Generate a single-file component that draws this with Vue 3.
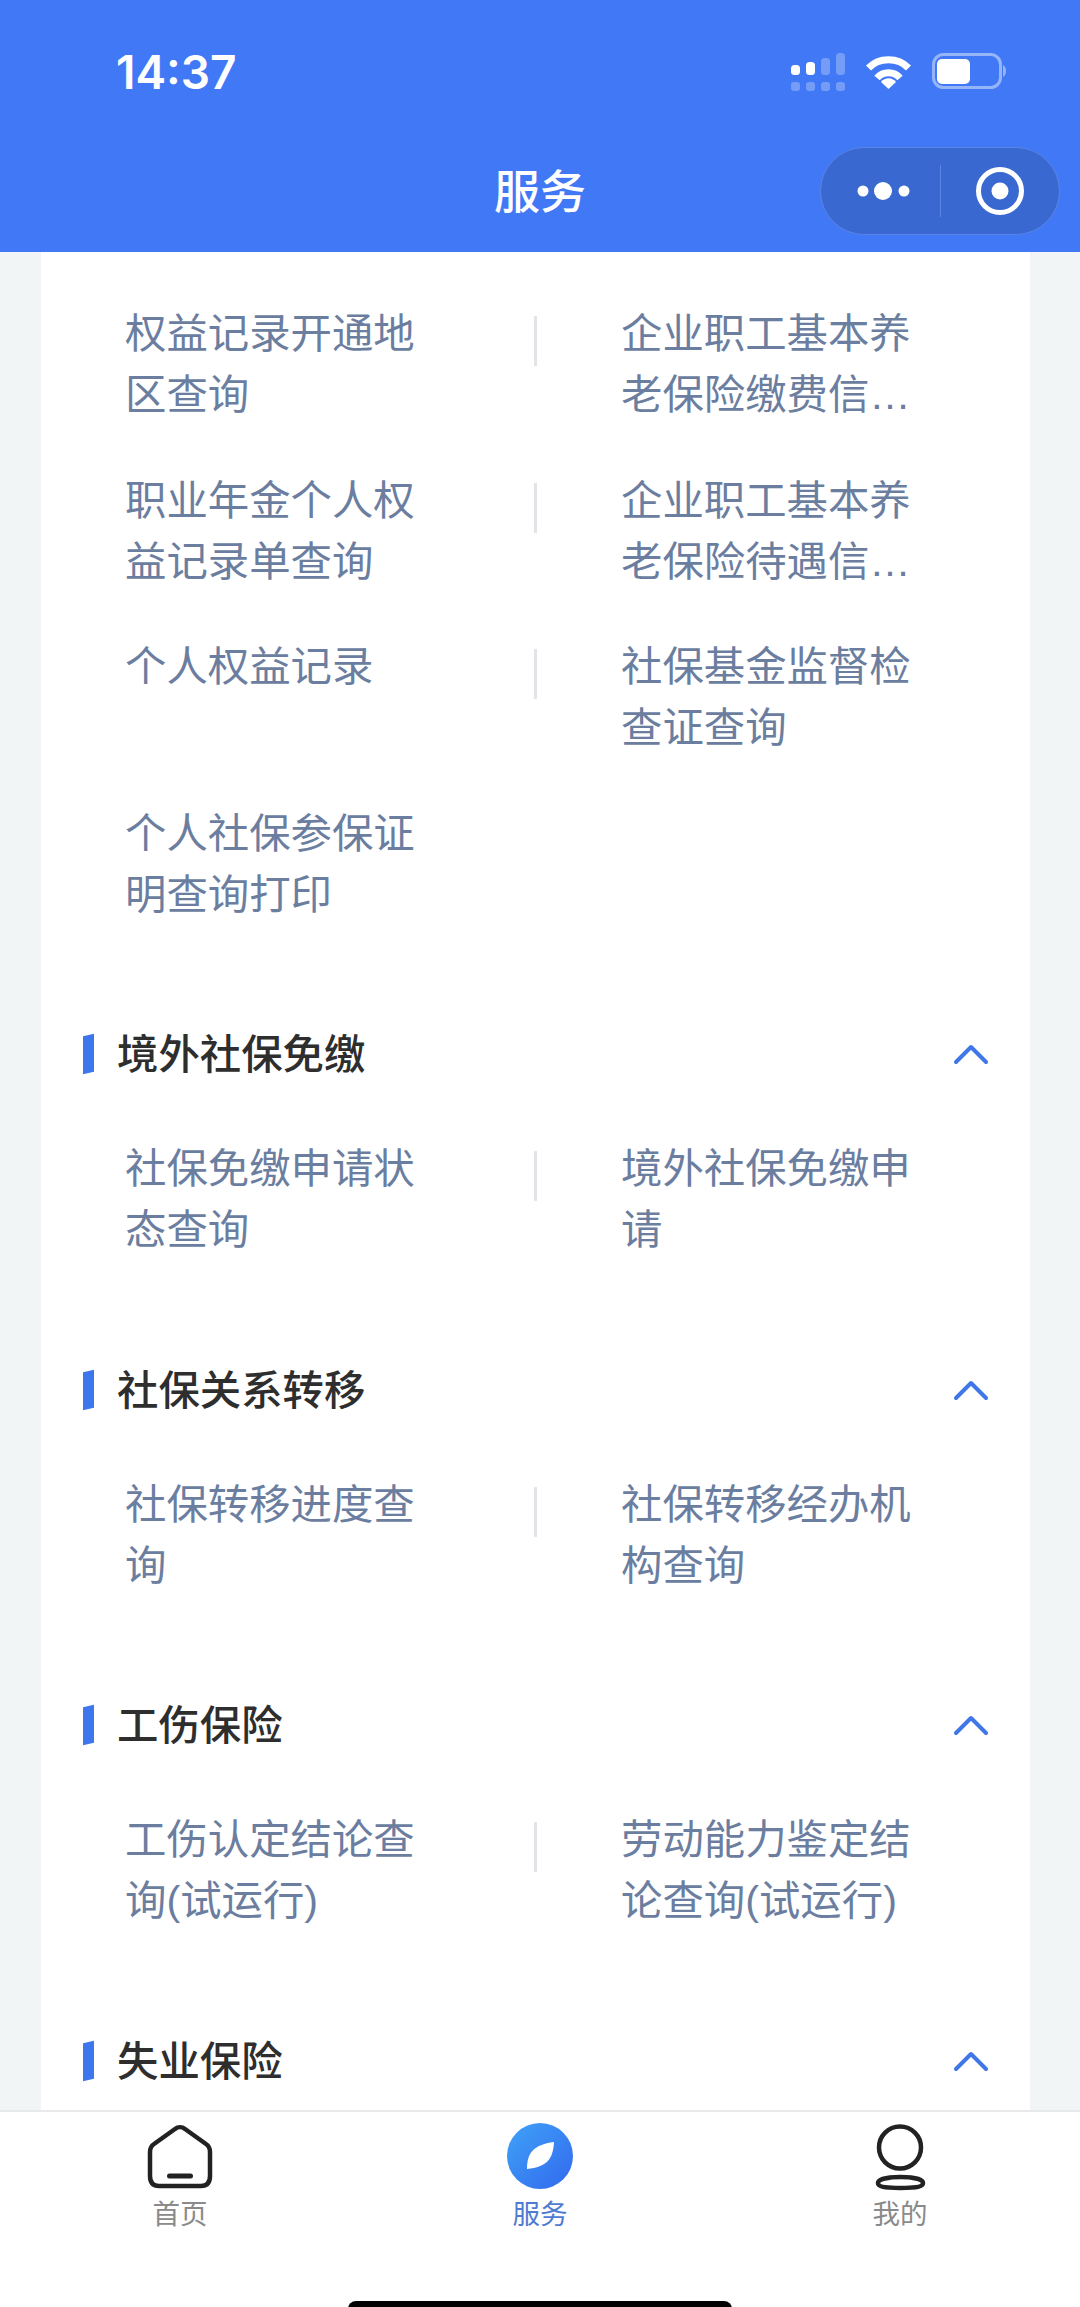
<template>
  <div class="page">
    <header class="top">
      <div class="status-bar">
        <span class="time">14:37</span>
        <div class="status-icons">
          <svg width="54" height="38" viewBox="0 0 54 38">
            <g fill="#fff">
              <rect x="0" y="12" width="9" height="10" rx="3.5" />
              <rect x="15" y="9" width="9" height="13" rx="3.5" />
            </g>
            <g fill="#fff" fill-opacity="0.28">
              <rect x="30" y="5" width="9" height="17" rx="3.5" />
              <rect x="45" y="0" width="9" height="22" rx="3.5" />
              <rect x="0" y="29" width="9" height="9" rx="3" />
              <rect x="15" y="29" width="9" height="9" rx="3" />
              <rect x="30" y="29" width="9" height="9" rx="3" />
              <rect x="45" y="29" width="9" height="9" rx="3" />
            </g>
          </svg>
          <svg width="47" height="35" viewBox="0 0 47 35" fill="none" stroke="#fff" stroke-width="7">
            <path d="M3.5 13C14 2 33 2 43.5 13" />
            <path d="M12 23C18 16 29 16 35 23" />
            <path d="M23.5 34L16 27C20 22 27 22 31 27Z" fill="#fff" stroke="none" />
          </svg>
          <svg width="76" height="38" viewBox="0 0 76 38" fill="none">
            <rect x="1.5" y="1.5" width="67" height="33" rx="10" stroke="#fff" stroke-opacity="0.45" stroke-width="3" />
            <rect x="5" y="6" width="33" height="25" rx="5" fill="#fff" />
            <path d="M71 12C75 14 75 22 71 24Z" fill="#fff" fill-opacity="0.45" />
          </svg>
        </div>
      </div>
      <div class="nav-bar">
        <h1 class="nav-title">服务</h1>
        <div class="capsule">
          <div class="capsule-part">
            <svg class="dots" width="54" height="18" viewBox="0 0 54 18" fill="#fff">
              <circle cx="6" cy="9" r="5.5" />
              <circle cx="26" cy="9" r="9" />
              <circle cx="47" cy="9" r="5.5" />
            </svg>
          </div>
          <i class="capsule-line"></i>
          <div class="capsule-part">
            <svg width="50" height="50" viewBox="0 0 50 50" fill="none">
              <circle cx="25" cy="25" r="21.5" stroke="#fff" stroke-width="5" />
              <circle cx="25" cy="25" r="8.5" fill="#fff" />
            </svg>
          </div>
        </div>
      </div>
    </header>

    <main class="scroll">
      <div class="card">
        <section v-for="(group, i) in groups" :key="i" class="group">
          <div v-if="group.title" class="group-head">
            <i class="group-mark"></i>
            <span class="group-title">{{ group.title }}</span>
            <svg class="chevron" width="36" height="22" viewBox="0 0 36 22" fill="none">
              <path d="M3 19L18 4L33 19" stroke="#3f76e8" stroke-width="4" stroke-linecap="round" stroke-linejoin="round" />
            </svg>
          </div>
          <div class="items">
            <div v-for="(item, j) in group.items" :key="j" class="item" :class="{ right: j % 2 === 1 }">
              <span class="item-text">{{ item }}</span>
            </div>
          </div>
        </section>
      </div>
    </main>

    <footer class="tabbar">
      <div class="tab">
        <svg class="tab-icon" width="66" height="66" viewBox="0 0 66 66" fill="none">
          <path d="M28 6C31 3.5 35 3.5 38 6L59 21C62 23 63 26 63 29V53C63 60 60 63 54 63H12C6 63 3 60 3 53V29C3 26 4 23 7 21Z" stroke="#222" stroke-width="4.5" stroke-linejoin="round" />
          <path d="M22.5 53H43.5" stroke="#222" stroke-width="5" stroke-linecap="round" />
        </svg>
        <span class="tab-label">首页</span>
      </div>
      <div class="tab active">
        <svg class="tab-icon" width="66" height="66" viewBox="0 0 66 66">
          <defs>
            <linearGradient id="serviceFill" x1="0" y1="0" x2="1" y2="1">
              <stop offset="0" stop-color="#3fa3f7" />
              <stop offset="1" stop-color="#3268ee" />
            </linearGradient>
          </defs>
          <circle cx="33" cy="33" r="33" fill="url(#serviceFill)" />
          <path d="M20 46C20 30 26 22 47 19C46 36 40 44 20 46Z" fill="#fff" />
        </svg>
        <span class="tab-label">服务</span>
      </div>
      <div class="tab">
        <svg class="tab-icon" width="66" height="66" viewBox="0 0 66 66" fill="none" stroke="#222" stroke-width="4.5">
          <circle cx="33" cy="24.5" r="21" />
          <path d="M11 60C11 56 22 54 33.5 54C45 54 56 56 56 60C56 63 52 65 33.5 65C15 65 11 63 11 60Z" />
        </svg>
        <span class="tab-label">我的</span>
      </div>
      <i class="home-bar"></i>
    </footer>
  </div>
</template>

<script setup>
const groups = [
  {
    items: [
      '权益记录开通地区查询',
      '企业职工基本养老保险缴费信…',
      '职业年金个人权益记录单查询',
      '企业职工基本养老保险待遇信…',
      '个人权益记录',
      '社保基金监督检查证查询',
      '个人社保参保证明查询打印'
    ]
  },
  { title: '境外社保免缴', items: ['社保免缴申请状态查询', '境外社保免缴申请'] },
  { title: '社保关系转移', items: ['社保转移进度查询', '社保转移经办机构查询'] },
  { title: '工伤保险', items: ['工伤认定结论查询(试运行)', '劳动能力鉴定结论查询(试运行)'] },
  { title: '失业保险', items: [] }
]
</script>

<style>
html,
body {
  margin: 0;
  background: #f2f5f5;
}
</style>

<style scoped>
.page {
  display: flex;
  flex-direction: column;
  height: 2307px;
  overflow: hidden;
  background: #f2f5f5;
  font-family: "Liberation Sans", "Noto Sans CJK SC", sans-serif;
}

.top {
  flex: none;
  height: 252px;
  background: #4178f5;
  color: #fff;
}

.status-bar {
  display: flex;
  align-items: center;
  justify-content: space-between;
  height: 144px;
  padding: 0 72px 0 116px;
  box-sizing: border-box;
}

.time {
  font-family: Inter, "Liberation Sans", sans-serif;
  font-size: 46px;
  font-weight: 600;
}

.status-icons {
  display: flex;
  align-items: center;
  gap: 20px;
}

.nav-bar {
  position: relative;
  display: flex;
  justify-content: center;
  height: 108px;
}

.nav-title {
  margin: 0;
  font-size: 46px;
  font-weight: 500;
  line-height: 96px;
}

.capsule {
  position: absolute;
  top: 3px;
  right: 20px;
  display: flex;
  align-items: center;
  width: 240px;
  height: 88px;
  border: 1px solid #5a85e6;
  border-radius: 44px;
  background: #3868d0;
  box-sizing: border-box;
}

.capsule-part {
  display: flex;
  flex: 1;
  align-items: center;
  justify-content: center;
}

.dots {
  margin-left: 7px;
}

.capsule-line {
  width: 1px;
  height: 52px;
  background: #5a85e6;
}

.scroll {
  flex: 1;
  min-height: 0;
  overflow: hidden;
}

.card {
  margin: 0 50px 0 41px;
  padding-top: 52px;
  background: #fff;
}

.group {
  padding-bottom: 52px;
}

.group-head {
  display: flex;
  align-items: center;
  height: 62px;
  padding: 0 41px 0 42px;
  margin: 45.5px 0 54px;
}

.group-mark {
  width: 11px;
  height: 38px;
  margin-right: 23px;
  background: #3e76ee;
  transform: skewY(-14deg);
}

.group-title {
  flex: 1;
  padding-bottom: 6px;
  font-size: 41.4px;
  font-weight: 500;
  color: #2e2e2e;
}

.items {
  display: grid;
  grid-template-columns: 493px 1fr;
  row-gap: 44.5px;
}

.item {
  position: relative;
  min-height: 122px;
  padding-left: 84px;
  padding-right: 90px;
  box-sizing: border-box;
}

.item.right {
  padding-left: 87px;
  padding-right: 100px;
}

.item.right::before {
  content: "";
  position: absolute;
  top: 12px;
  left: 0;
  width: 3px;
  height: 50px;
  background: #e2e4e8;
}

.item-text {
  display: block;
  font-size: 41.4px;
  line-height: 61px;
  color: #6b7e9f;
}

.tabbar {
  position: relative;
  flex: none;
  display: flex;
  height: 197px;
  border-top: 2px solid #e8eaea;
  background: #fff;
  box-sizing: border-box;
}

.tab {
  display: flex;
  flex: 1;
  flex-direction: column;
  align-items: center;
  padding-top: 11px;
  color: #8a8a8a;
}

.tab.active {
  color: #4f7bd1;
}

.tab-icon {
  display: block;
  overflow: visible;
}

.tab-label {
  margin-top: 6px;
  font-size: 27.5px;
  line-height: 40px;
}

.home-bar {
  position: absolute;
  bottom: -2px;
  left: 348px;
  width: 384px;
  height: 8px;
  border-radius: 8px 8px 0 0;
  background: #000;
}
</style>
